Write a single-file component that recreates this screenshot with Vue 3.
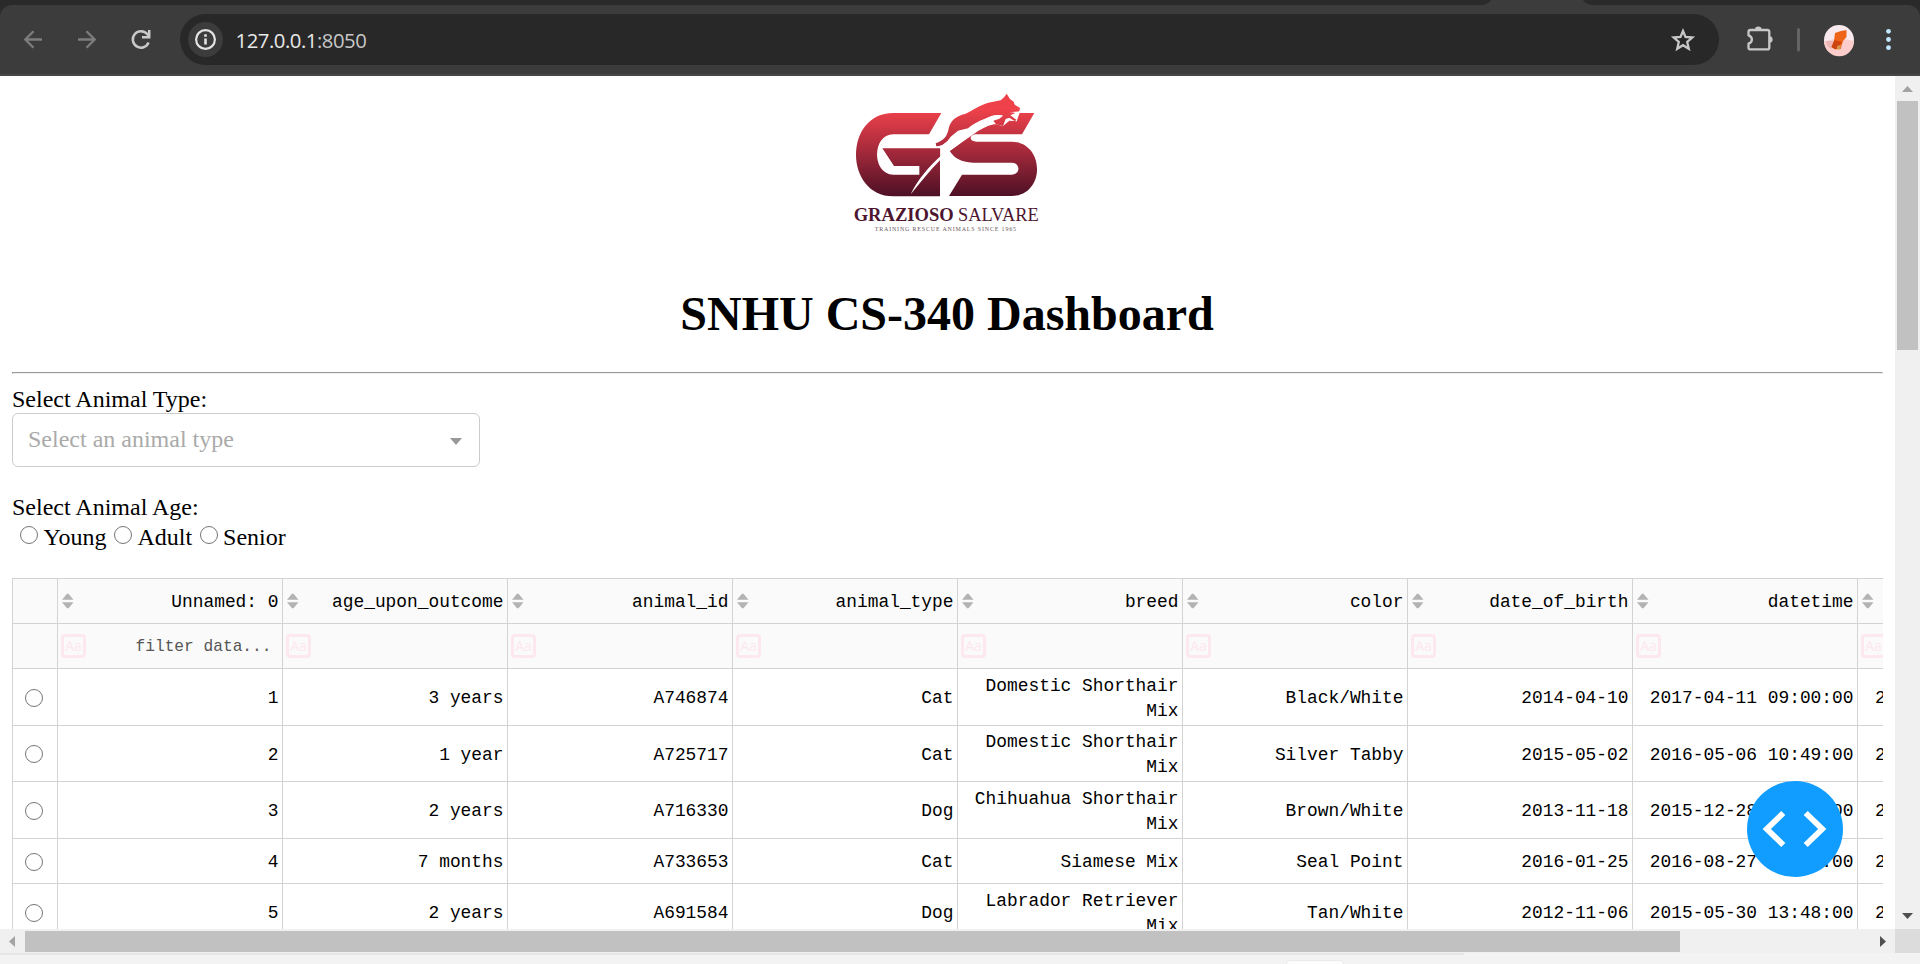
<script setup>
const columns = ['Unnamed: 0', 'age_upon_outcome', 'animal_id', 'animal_type', 'breed', 'color', 'date_of_birth', 'datetime', '']
const rows = [
  ['1', '3 years', 'A746874', 'Cat', 'Domestic Shorthair Mix', 'Black/White', '2014-04-10', '2017-04-11 09:00:00', '2'],
  ['2', '1 year', 'A725717', 'Cat', 'Domestic Shorthair Mix', 'Silver Tabby', '2015-05-02', '2016-05-06 10:49:00', '2'],
  ['3', '2 years', 'A716330', 'Dog', 'Chihuahua Shorthair Mix', 'Brown/White', '2013-11-18', '2015-12-28 18:43:00', '2'],
  ['4', '7 months', 'A733653', 'Cat', 'Siamese Mix', 'Seal Point', '2016-01-25', '2016-08-27 18:11:00', '2'],
  ['5', '2 years', 'A691584', 'Dog', 'Labrador Retriever Mix', 'Tan/White', '2012-11-06', '2015-05-30 13:48:00', '2'],
]
const ages = ['Young', 'Adult', 'Senior']
</script>

<template>
  <div class="window">
    <div class="tabstrip">
      <svg width="110" height="5" viewBox="0 0 110 5"><path d="M0 5Q7 4 9 0H101Q103 4 110 5Z" fill="#3c3c3c" /></svg>
    </div>
    <div class="toolbar">
      <svg class="nav" width="180" height="51" viewBox="0 0 180 51" fill="none" stroke-width="2.3">
        <path d="M42 25.5H26M33.5 17.2L25.3 25.5L33.5 33.8" stroke="#7d7d7d" />
        <path d="M78 25.5H94M86.5 17.2L94.7 25.5L86.5 33.8" stroke="#7d7d7d" />
        <path d="M148.6 28.5A8.2 8.2 0 1 1 147.4 20.3L149.3 22.6" stroke="#c9c9c9" stroke-width="2.5" />
        <path d="M149.2 16V23.2H142" stroke="#c9c9c9" stroke-width="2.5" />
      </svg>
      <div class="address">
        <span class="info">
          <svg width="35" height="35" viewBox="0 0 35 35">
            <circle cx="17.5" cy="17.5" r="9.4" fill="none" stroke="#e3e3e3" stroke-width="2.2" />
            <path d="M16.2 16.4H18.8V22.5H16.2ZM16.2 12.3H18.8V14.7H16.2Z" fill="#e3e3e3" />
          </svg>
        </span>
        <span class="url">127.0.0.1<span class="port">:8050</span></span>
        <svg class="star" width="26" height="26" viewBox="0 0 26 26" fill="none" stroke="#c7c7c7" stroke-width="2.3">
          <path d="M13 4L15.5 10L22.3 10.500L17.200 14.900L18.800 21.800L13 18.200L7.200 21.800L8.800 14.900L3.700 10.500L10.500 10Z" />
        </svg>
      </div>
      <svg class="tools" width="201" height="51" viewBox="0 0 201 51">
        <path d="M31.500 16H48.300Q50.300 16 50.300 18V33.400Q50.300 35.400 48.300 35.400H31.500Q29.500 35.400 29.500 33.400V29.600C34 28 34 22.700 29.500 21.300V18Q29.500 16 31.500 16Z" fill="none" stroke="#c7c7c7" stroke-width="2.3" stroke-linejoin="round" />
        <path d="M36 15.8A3.3 3.3 0 0 1 42.600 15.800ZM50.400 22.300A3.200 3.200 0 0 1 50.400 28.700Z" fill="#c7c7c7" />
        <rect x="78" y="14" width="3" height="23.500" rx="1.500" fill="#646464" />
        <circle cx="120" cy="26" r="15" fill="#f8e9ee" />
        <path d="M105 27.500L120 24L135 27A15 15 0 0 1 105 27.500Z" fill="#fccdcb" />
        <path d="M107 27L116 27L113 35Q107 32 107 27Z" fill="#edb5b3" />
        <path d="M116 19L122 17L127.500 16V23L124 27L122 34L116 35.500L112.500 33L115 27Z" fill="#ee6519" />
        <path d="M115.500 26L123 28L120 32L122 35L116 35L112.500 33Z" fill="#ce4310" />
        <path d="M118 32L122 31L121 35.500H118Z" fill="#d7964b" />
        <g fill="#c2e7ff">
          <circle cx="169.500" cy="17.300" r="2.400" /><circle cx="169.500" cy="25.500" r="2.400" /><circle cx="169.500" cy="33.700" r="2.400" />
        </g>
      </svg>
    </div>

    <div class="viewport">
      <main class="page">
        <svg class="logo" width="240" height="170" viewBox="0 0 720 510">
          <defs>
            <linearGradient id="crimson" gradientUnits="userSpaceOnUse" x1="0" y1="90" x2="0" y2="350">
              <stop offset="0" stop-color="#ee414a" />
              <stop offset=".5" stop-color="#a0283a" />
              <stop offset="1" stop-color="#4c1025" />
            </linearGradient>
          </defs>
          <g fill="url(#crimson)">
            <path d="M334 99L297 163H190C125 163 125 284 190 284H268V258H192L157 205H331V229C300 258 265 295 242 343C272 307 300 270 330 241V349H190C42 349 40 99 190 99Z" />
            <path d="M613 99L576 163H440C416 163 416 185 440 185H545C645 188 648 345 545 348H357L396 284H545C572 284 572 248 545 248H430C390 247 372 232 359 213C390 192 415 172 445 151C468 139 485 132 500 133L518 139L538 122L560 124L568 99Z" />
            <path d="M319 199L317 190C340 181 350 172 355 150C360 121 379 108 405 102C430 90 450 75 475 68L512 61C520 55 525 48 530 41L540 57L551 65L554 74L570 84L568 94L546 96L525 109C505 102 490 104 470 114C446 123 430 132 414 145L384 152L362 170C350 188 339 197 319 199Z" />
          </g>
          <path d="M522 108L546 97H570L563 112L560 124L536 116L524 124L516 120Z" fill="#fff" />
          <path d="M331 200C345 190 360 180 370 169L386 153L414 147C430 133 446 124 470 115C490 105 505 103 524 110L519 124L497 130C474 135 450 148 426 166Q390 190 359 213L331 233Z" fill="#fff" />
          <path d="M522 105L546 97L556 99L541 106L559 119L555 124L538 113L527 117L519 138L498 133L490 122L508 116Z" fill="url(#crimson)" />
          <text x="71" y="423" textLength="300" lengthAdjust="spacingAndGlyphs" class="brand bold">GRAZIOSO</text>
          <text x="384" y="423" textLength="242" lengthAdjust="spacingAndGlyphs" class="brand">SALVARE</text>
          <text x="134" y="453" textLength="424" class="motto">TRAINING RESCUE ANIMALS SINCE 1965</text>
        </svg>
        <h1>SNHU CS-340 Dashboard</h1>
        <hr />
        <div class="label">Select Animal Type:</div>
        <div class="dropdown">
          <span>Select an animal type</span>
          <i class="caret"></i>
        </div>
        <div class="label age-label">Select Animal Age:</div>
        <div class="ages">
          <label v-for="age in ages" :key="age"><i class="radio"></i><span>{{ age }}</span></label>
        </div>

        <div class="table">
          <div class="row head">
            <div class="cell pick"></div>
            <div v-for="(name, i) in columns" :key="i" class="cell title">
              <svg class="sort" width="12" height="16" viewBox="0 0 12 16" fill="#b3b3b3"><path d="M0 6.700L5 .7H6.500L11.500 6.700ZM0 9.200H11.500L6.500 15.200H5Z" /></svg>
              <span>{{ name }}</span>
            </div>
          </div>
          <div class="row head">
            <div class="cell pick"></div>
            <div v-for="(name, i) in columns" :key="i" class="cell filter">
              <span class="case">Aa</span>
              <span v-if="i === 0" class="hint">filter data...</span>
            </div>
          </div>
          <div v-for="(row, r) in rows" :key="r" class="row data" :class="{ single: r === 3, short: r === 1 }">
            <div class="cell pick"><i class="radio"></i></div>
            <div v-for="(value, c) in row" :key="c" class="cell" :class="{ cut: c === 8 }">{{ value }}</div>
          </div>
        </div>
      </main>
      <div class="vscroll">
        <svg width="25" height="25" viewBox="0 0 25 25"><path d="M7 16L12.500 10L18 16Z" fill="#a3a3a3" /></svg>
        <div class="vthumb"></div>
        <svg width="25" height="25" viewBox="0 0 25 25"><path d="M7 9L12.500 15L18 9Z" fill="#505050" /></svg>
      </div>
      <button class="debug" type="button">
        <svg width="96" height="96" viewBox="0 0 96 96" fill="none" stroke="#fff" stroke-width="5.800"><path d="M36.300 32L19.800 48L36.300 64M58.700 32L75.200 48L58.700 64" /></svg>
      </button>
    </div>
    <div class="hscroll">
      <svg width="25" height="24" viewBox="0 0 25 24"><path d="M15 7V18L9 12.500Z" fill="#a3a3a3" /></svg>
      <div class="hthumb"></div>
      <svg class="right" width="25" height="24" viewBox="0 0 25 24"><path d="M10 7V18L16 12.500Z" fill="#505050" /></svg>
      <div class="corner"></div>
    </div>
    <div class="below"><div class="edge"></div><div class="blip"></div></div>
  </div>
</template>

<style>
body { margin: 0; overflow: hidden; }
</style>

<style scoped>
.window { width: 1920px; height: 964px; display: flex; flex-direction: column; overflow: hidden; background: #2a2a2a; }
.window svg { display: block; flex: none; }
.tabstrip { height: 5px; flex: none; padding-left: 1482px; }
.toolbar { height: 71px; box-sizing: border-box; flex: none; background: #3c3c3c; border-bottom: 2px solid #474747; border-radius: 12px 12px 0 0; padding-top: 9px; display: flex; align-items: flex-start; }
.address { width: 1539px; height: 51px; border-radius: 26px; background: #282828; display: flex; align-items: center; box-sizing: border-box; padding: 0 23px 0 8px; }
.info { width: 35px; height: 35px; border-radius: 50%; background: #3c3c3c; }
.url { font: 20.3px/28px "Open Sans", sans-serif; letter-spacing: -.46px; color: #e8e8e8; margin-left: 12.5px; flex: 1; }
.port { color: #c7c7c7; }
.viewport { position: relative; height: 853px; flex: none; display: flex; overflow: hidden; background: #fff; }
.page { width: 1871px; padding: 4px 12px 0; flex: none; overflow: hidden; display: flex; flex-direction: column; align-items: flex-start; font: 24px/27px "Liberation Serif", "Times New Roman", serif; color: #000; }
.logo { margin-left: 818px; }
.brand { font: 58px "Liberation Serif", serif; fill: #4d1530; }
.bold { font-weight: bold; }
.motto { font: 18px "Liberation Serif", serif; fill: #6c5a62; }
h1 { width: 100%; margin: 37px 0 31px; font-size: 48px; line-height: 54px; text-align: center; text-indent: -1px; flex: none; }
hr { width: 100%; height: 2px; box-sizing: border-box; margin: 0 0 12px; border: 1px solid; border-color: #9a9a9a #eee #eee #9a9a9a; flex: none; }
.label { height: 27px; flex: none; }
.dropdown { width: 468px; height: 54px; box-sizing: border-box; border: 1px solid #ccc; border-radius: 6px; padding: 0 17px 0 15px; display: flex; align-items: center; justify-content: space-between; color: #aaa; flex: none; }
.dropdown span { margin-top: -2px; }
.caret { border: 6.5px solid transparent; border-top: 7px solid #999; border-bottom: 0; margin-top: 2px; }
.age-label { margin-top: 27px; }
.ages { height: 27px; margin: 3px 0 27px 8px; display: flex; gap: 7.5px; flex: none; }
.ages label { display: flex; }
.radio { width: 18px; height: 18px; box-sizing: border-box; border: 1.5px solid #767676; border-radius: 50%; background: #fff; flex: none; }
.ages .radio { margin: 2px 5.5px 0 0; }
.table { width: 1871px; overflow: hidden; border-top: 1px solid #d3d3d3; flex: none; font: 17.87px/25px "Liberation Mono", monospace; }
.row { display: grid; grid-template-columns: 46px repeat(9, 225px); width: 2071px; height: 45px; }
.data { height: 57px; }
.short { height: 56px; }
.single { height: 45px; }
.head { background: #fafafa; }
.cell { box-sizing: border-box; border-right: 1px solid #d3d3d3; border-bottom: 1px solid #d3d3d3; padding: 0 3.5px 0 3px; text-align: right; display: flex; align-items: center; justify-content: flex-end; min-width: 0; }
.data .cell { padding-top: 3px; }
.cell.pick { border-left: 1px solid #d3d3d3; justify-content: center; padding: 1px 3px 0 0; }
.title { justify-content: space-between; padding-left: 3.5px; }
.title .sort { margin-top: -1px; }
.title span { margin-top: 2px; }
.filter { justify-content: space-between; padding: 0 10.5px 0 3px; }
.case { width: 25px; height: 24px; box-sizing: border-box; border: 3px solid #fee8ef; border-radius: 4px; color: #fee8ef; font: 14px/18px "Open Sans", sans-serif; text-align: center; }
.hint { font-size: 16.2px; color: #555; margin-top: 2px; }
.data .cut { justify-content: flex-start; padding-left: 17px; }
.vscroll { width: 25px; background: #f0f0f0; display: flex; flex-direction: column; }
.vthumb { height: 249px; margin: 0 2px auto; background: #c1c1c1; }
.debug { position: absolute; left: 1747px; top: 705px; width: 96px; height: 96px; border: 0; padding: 0; border-radius: 50%; background: #119dff; }
.hscroll { height: 24px; flex: none; background: #f0f0f0; display: flex; }
.hthumb { width: 1655px; height: 21px; margin-top: 2px; background: #c1c1c1; }
.right { margin-left: auto; }
.corner { width: 25px; background: #dcdcdc; }
.below { height: 11px; flex: none; background: #f3f3f3; }
.edge { width: 1464px; height: 2px; background: #e5e5e5; }
.blip { width: 56px; height: 3px; margin: 5px 0 0 1286px; background: #fcfcfc; border: 1px solid #eaeaea; border-bottom: 0; border-radius: 4px 4px 0 0; }
</style>
